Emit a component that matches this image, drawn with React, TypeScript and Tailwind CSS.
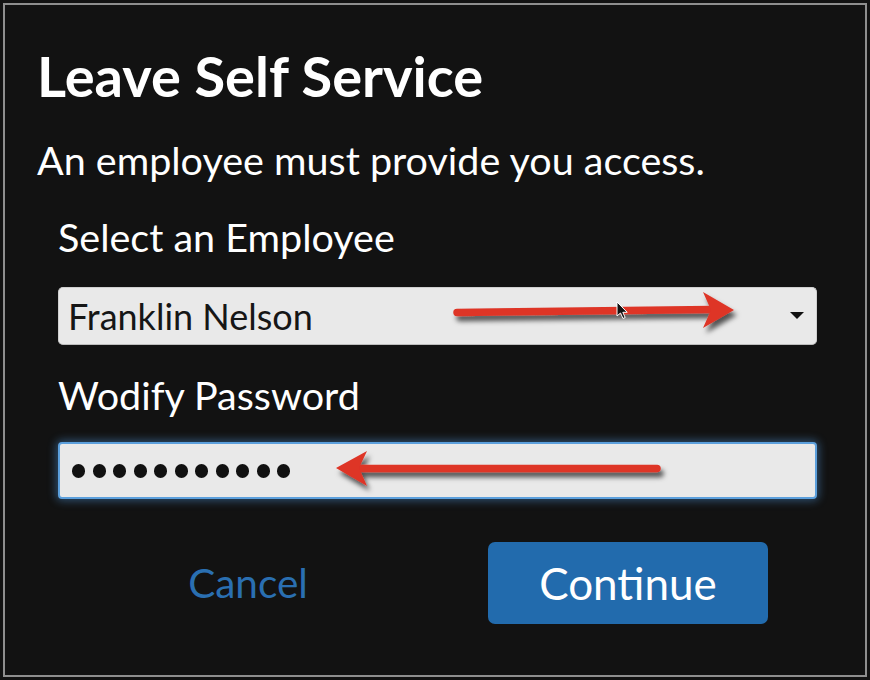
import React from 'react';

const Arrows: React.FC = () => (
  <svg
    className="absolute left-0 top-0 pointer-events-none"
    width={870}
    height={680}
    viewBox="0 0 870 680"
  >
    <defs>
      <filter id="arrowShadow" x="-10%" y="-50%" width="120%" height="200%">
        <feDropShadow dx="3" dy="5" stdDeviation="2.5" floodColor="#000" floodOpacity="0.65" />
      </filter>
    </defs>
    <g filter="url(#arrowShadow)" fill="#de3427" stroke="#de3427">
      <line x1="457" y1="312.5" x2="712" y2="309.5" strokeWidth="7.5" strokeLinecap="round" />
      <polygon points="734,310 703,292 711,310 703,328" strokeWidth="0" />
      <line x1="357" y1="468.5" x2="657" y2="468.5" strokeWidth="7.5" strokeLinecap="round" />
      <polygon points="336,468 367,451 359,468 367,486" strokeWidth="0" />
    </g>
    <path
      d="M617 302 L617 316 L620.5 313 L623 318.5 L625.2 317.5 L622.8 312.3 L627.2 312.3 Z"
      fill="#111"
      stroke="#fff"
      strokeWidth="1"
      strokeLinejoin="round"
    />
  </svg>
);

export default function App() {
  return (
    <div className="relative w-[870px] h-[680px] bg-[#121212] p-[3px] font-['Lato','Liberation_Sans',sans-serif]">
      <div className="h-full border-2 border-[#8e8e8e] pl-[32px] pt-[37px]">
        <h1 className="text-[56px] leading-[1.2] font-bold text-white">Leave Self Service</h1>
        <p className="mt-[27px] text-[39.5px] leading-[1.2] text-white">An employee must provide you access.</p>

        <div className="pl-[21px] pr-[48px]">
          <label className="block mt-[29px] text-[39.5px] leading-[1.2] text-white">Select an Employee</label>
          <div className="mt-[27px] h-[58px] rounded-[5px] bg-[#e9e9e9] border border-[#cfcfcf] border-b-[#bdbdbd] flex items-center justify-between pl-[9px] pr-[12px]">
            <span className="text-[36px] text-[#161616]">Franklin Nelson</span>
            <svg width="14" height="7" viewBox="0 0 14 7">
              <polygon points="0,0 14,0 7,7" fill="#111" />
            </svg>
          </div>

          <label className="block mt-[26px] text-[39.5px] leading-[1.2] text-white">Wodify Password</label>
          <div className="mt-[24px] h-[57px] rounded-[4px] bg-[#e9e9e9] border-2 border-[#5b9fdc] shadow-[0_0_8px_2px_rgba(80,150,220,0.45)] flex items-center gap-[7.5px] pl-[12px]">
            {Array.from({ length: 11 }).map((_, i) => (
              <span key={i} className="block w-[13px] h-[14px] rounded-full bg-[#111]" />
            ))}
          </div>

          <div className="mt-[43px] flex items-center">
            <button className="ml-[70px] w-[240px] text-center text-[40.5px] text-[#2a6fb1]">Cancel</button>
            <button className="ml-[120px] w-[280px] h-[82px] rounded-[7px] bg-[#226bad] text-white text-[44px]">
              Continue
            </button>
          </div>
        </div>
      </div>
      <Arrows />
    </div>
  );
}
